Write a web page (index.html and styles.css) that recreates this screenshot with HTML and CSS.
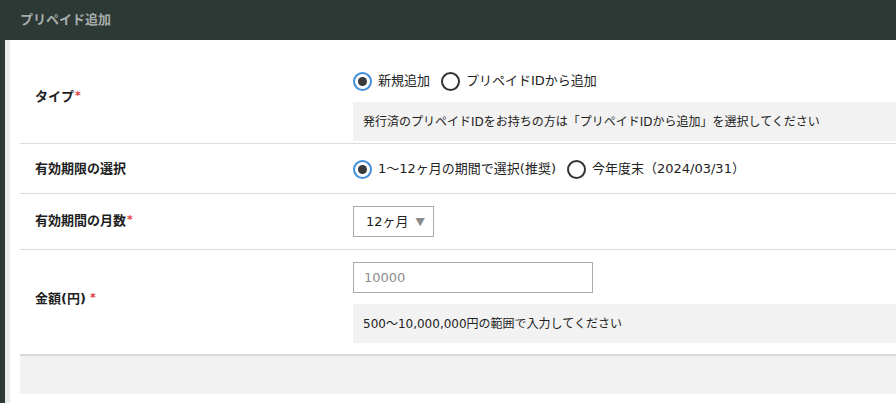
FILE: index.html
```html
<!DOCTYPE html>
<html lang="ja">
<head>
<meta charset="utf-8">
<title>プリペイド追加</title>
<link rel="stylesheet" href="styles.css">
</head>
<body>
<header class="page-header"><h1 class="page-title">プリペイド追加</h1></header>
<div class="layout">
  <div class="stripe-dark"></div>
  <div class="stripe-light"></div>
  <main class="content">
    <form class="form">
      <div class="row row-type">
        <div class="label label-shift">タイプ<span class="req">*</span></div>
        <div class="value">
          <div class="radios radios-first">
            <label class="radio"><span class="dot checked"></span>新規追加</label>
            <label class="radio"><span class="dot"></span>プリペイドIDから追加</label>
          </div>
          <div class="note">発行済のプリペイドIDをお持ちの方は「プリペイドIDから追加」を選択してください</div>
        </div>
      </div>
      <div class="row row-period">
        <div class="label">有効期限の選択</div>
        <div class="value">
          <div class="radios">
            <label class="radio"><span class="dot checked"></span>1〜12ヶ月の期間で選択(推奨)</label>
            <label class="radio"><span class="dot"></span>今年度末（2024/03/31）</label>
          </div>
        </div>
      </div>
      <div class="row row-months">
        <div class="label">有効期間の月数<span class="req">*</span></div>
        <div class="value">
          <div class="select"><span>12ヶ月</span><span class="arrow">▼</span></div>
        </div>
      </div>
      <div class="row row-amount">
        <div class="label label-shift">金額(円)<span class="req req-gap">*</span></div>
        <div class="value">
          <div class="input"><span class="placeholder">10000</span></div>
          <div class="note">500〜10,000,000円の範囲で入力してください</div>
        </div>
      </div>
    </form>
    <div class="footer-bar"></div>
  </main>
</div>
</body>
</html>
```
FILE: styles.css
```css
html, body {
  margin: 0;
  padding: 0;
  background: #ffffff;
  font-family: "DejaVu Sans", "Noto Sans CJK JP", sans-serif;
  color: #222222;
  font-size: 13px;
  height: 403px;
  overflow: hidden;
}

.page-header {
  height: 40px;
  background: #2c3935;
  display: flex;
  align-items: center;
  padding-left: 20px;
}

.page-title {
  margin: 0;
  font-size: 13px;
  font-weight: bold;
  color: #a9adac;
  line-height: 16px;
}

.layout {
  display: flex;
  height: 363px;
}

.stripe-dark {
  width: 5px;
  background: #2c3935;
}

.stripe-light {
  width: 5px;
  background: #ebebeb;
}

.content {
  flex: 1;
  padding-left: 10px;
  display: flex;
  flex-direction: column;
}

.row {
  display: flex;
  align-items: center;
  border-bottom: 1px solid #dcdcdc;
}

.row-type {
  padding: 20px 0 2px;
}

.row-period {
  padding: 14px 0 13px;
}

.row-months {
  padding: 12px 0 12px;
}

.row-amount {
  padding: 12px 0 11px;
  border-bottom: none;
}

.label {
  width: 318px;
  padding-left: 15px;
  font-weight: bold;
  line-height: 16px;
  color: #1e1e1e;
}

.label-shift {
  padding-bottom: 6px;
}

.req {
  color: #e0393e;
  font-size: 11px;
  margin-left: 1px;
  position: relative;
  top: -2px;
}

.req-gap {
  margin-left: 4px;
}

.value {
  flex: 1;
  display: flex;
  flex-direction: column;
}

.radios {
  display: flex;
  align-items: center;
  height: 22px;
}

.radios-first {
  margin-top: 10px;
  margin-bottom: 10px;
}

.radio {
  display: flex;
  align-items: center;
  line-height: 16px;
  margin-right: 11px;
  color: #222222;
}

.dot {
  box-sizing: border-box;
  width: 19px;
  height: 19px;
  border-radius: 50%;
  border: 2px solid #333333;
  margin-right: 6px;
  display: inline-flex;
  align-items: center;
  justify-content: center;
}

.dot.checked {
  border-color: #3f8fd8;
}

.dot.checked::after {
  content: "";
  width: 9px;
  height: 9px;
  border-radius: 50%;
  background: #3a3a3a;
}

.note {
  background: #f2f2f2;
  height: 39px;
  display: flex;
  align-items: center;
  padding-left: 10px;
  line-height: 16px;
  font-size: 12px;
  color: #222222;
}

.select {
  box-sizing: border-box;
  width: 81px;
  height: 31px;
  border: 1px solid #aaaaaa;
  display: flex;
  align-items: center;
  padding-left: 12px;
  line-height: 16px;
}

.arrow {
  color: #8a8a8a;
  font-size: 11px;
  margin-left: 7px;
  font-family: "DejaVu Sans", sans-serif;
  transform: scaleX(1.1);
}

.input {
  box-sizing: border-box;
  width: 240px;
  height: 31px;
  border: 1px solid #aaaaaa;
  display: flex;
  align-items: center;
  padding-left: 10px;
  margin-bottom: 11px;
}

.placeholder {
  color: #8c8c8c;
  line-height: 16px;
}

.footer-bar {
  height: 38px;
  background: #f1f1f1;
  border-top: 2px solid #d9d9d9;
}
```
